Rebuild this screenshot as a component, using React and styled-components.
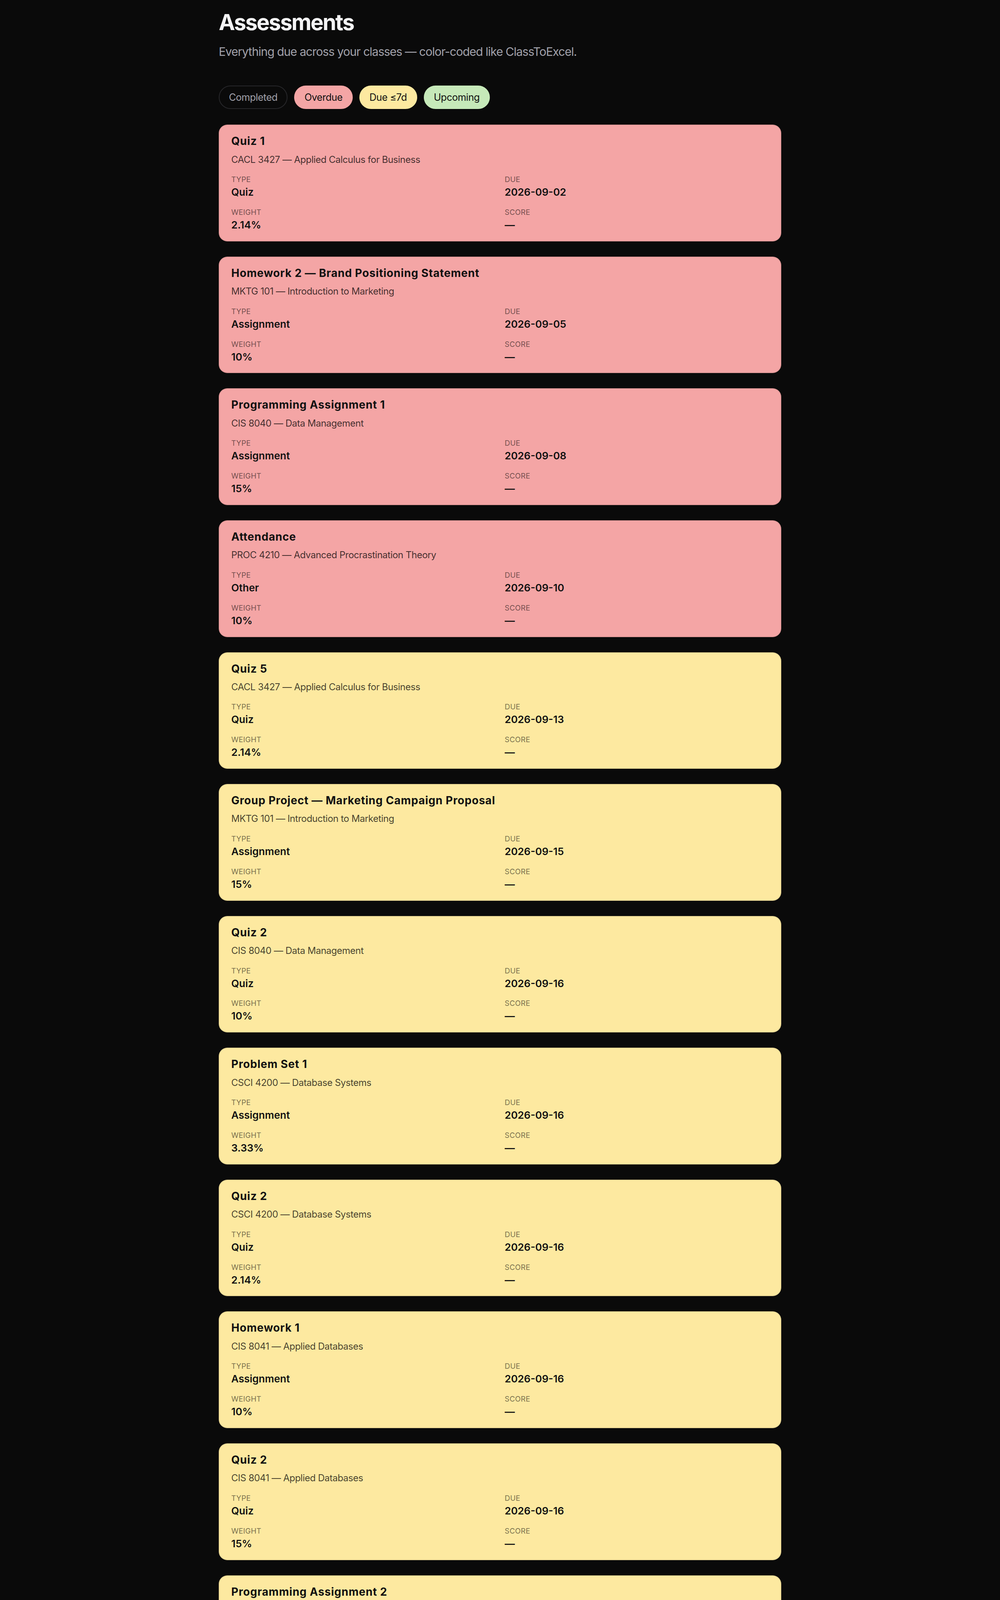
import React from 'react';
import styled, { createGlobalStyle } from 'styled-components';

const GlobalStyle = createGlobalStyle`
  html, body {
    margin: 0;
    padding: 0;
    background: #0a0a0a;
  }
  body {
    font-family: Inter, "Noto Sans", "Liberation Sans", sans-serif;
    -webkit-font-smoothing: antialiased;
  }
  * {
    box-sizing: border-box;
  }
`;

const tones = {
  overdue: { bg: '#f4a5a5', text: '#111111' },
  soon: { bg: '#fde9a0', text: '#111111' },
  upcoming: { bg: '#c6e9b9', text: '#111111' },
  completed: { bg: 'transparent', text: '#a1a1aa', border: '#27272a' },
};

const Page = styled.main`
  max-width: 1440px;
  margin: 0 auto;
  padding: 24px 0 80px;
`;

const Title = styled.h1`
  margin: 0;
  font-size: 56px;
  line-height: 1.2;
  font-weight: 700;
  letter-spacing: -2.3px;
  color: #f4f4f5;
`;

const Subtitle = styled.p`
  margin: 19px 0 0;
  font-size: 30px;
  line-height: 1.5;
  letter-spacing: -1px;
  color: #a1a1aa;
`;

const Legend = styled.div`
  display: flex;
  gap: 17px;
  margin-top: 64px;
`;

const Pill = styled.span`
  display: inline-flex;
  align-items: center;
  padding: 15px 24px;
  border-radius: 999px;
  font-size: 25px;
  line-height: 26px;
  letter-spacing: -0.5px;
  background: ${p => tones[p.$tone].bg};
  color: ${p => tones[p.$tone].text};
  border: 2px solid ${p => tones[p.$tone].border || tones[p.$tone].bg};
`;

const CardList = styled.div`
  display: flex;
  flex-direction: column;
  gap: 39px;
  margin-top: 40px;
`;

const Card = styled.article`
  background: ${p => tones[p.$tone].bg};
  border: 2px solid rgba(0, 0, 0, 0.07);
  border-radius: 22px;
  padding: 22px 30px 23px;
  color: #111111;
`;

const CardTitle = styled.h2`
  margin: 0;
  font-size: 28px;
  line-height: 1.3;
  font-weight: 700;
  letter-spacing: 0.8px;
`;

const Course = styled.div`
  margin-top: 12px;
  font-size: 24px;
  line-height: 1.4;
  letter-spacing: -0.5px;
  color: rgba(0, 0, 0, 0.72);
`;

const Fields = styled.dl`
  display: grid;
  grid-template-columns: 1fr 1fr;
  column-gap: 24px;
  row-gap: 22px;
  margin: 22px 0 0;
`;

const Field = styled.div`
  display: flex;
  flex-direction: column;
  gap: 2px;
`;

const Label = styled.dt`
  font-size: 19px;
  line-height: 26px;
  text-transform: uppercase;
  letter-spacing: 0.2px;
  color: rgba(0, 0, 0, 0.55);
`;

const Value = styled.dd`
  margin: 0;
  font-size: 26px;
  line-height: 1.3;
  font-weight: 600;
  color: #111111;
`;

const assessments = [
  { title: 'Quiz 1', course: 'CACL 3427 — Applied Calculus for Business', type: 'Quiz', due: '2026-09-02', weight: '2.14%', tone: 'overdue' },
  { title: 'Homework 2 — Brand Positioning Statement', course: 'MKTG 101 — Introduction to Marketing', type: 'Assignment', due: '2026-09-05', weight: '10%', tone: 'overdue' },
  { title: 'Programming Assignment 1', course: 'CIS 8040 — Data Management', type: 'Assignment', due: '2026-09-08', weight: '15%', tone: 'overdue' },
  { title: 'Attendance', course: 'PROC 4210 — Advanced Procrastination Theory', type: 'Other', due: '2026-09-10', weight: '10%', tone: 'overdue' },
  { title: 'Quiz 5', course: 'CACL 3427 — Applied Calculus for Business', type: 'Quiz', due: '2026-09-13', weight: '2.14%', tone: 'soon' },
  { title: 'Group Project — Marketing Campaign Proposal', course: 'MKTG 101 — Introduction to Marketing', type: 'Assignment', due: '2026-09-15', weight: '15%', tone: 'soon' },
  { title: 'Quiz 2', course: 'CIS 8040 — Data Management', type: 'Quiz', due: '2026-09-16', weight: '10%', tone: 'soon' },
  { title: 'Problem Set 1', course: 'CSCI 4200 — Database Systems', type: 'Assignment', due: '2026-09-16', weight: '3.33%', tone: 'soon' },
  { title: 'Quiz 2', course: 'CSCI 4200 — Database Systems', type: 'Quiz', due: '2026-09-16', weight: '2.14%', tone: 'soon' },
  { title: 'Homework 1', course: 'CIS 8041 — Applied Databases', type: 'Assignment', due: '2026-09-16', weight: '10%', tone: 'soon' },
  { title: 'Quiz 2', course: 'CIS 8041 — Applied Databases', type: 'Quiz', due: '2026-09-16', weight: '15%', tone: 'soon' },
  { title: 'Programming Assignment 2', course: 'CIS 8040 — Data Management', type: 'Assignment', due: '2026-09-17', weight: '15%', tone: 'soon' },
];

const AssessmentCard = ({ item }) => (
  <Card $tone={item.tone}>
    <CardTitle>{item.title}</CardTitle>
    <Course>{item.course}</Course>
    <Fields>
      <Field>
        <Label>Type</Label>
        <Value>{item.type}</Value>
      </Field>
      <Field>
        <Label>Due</Label>
        <Value>{item.due}</Value>
      </Field>
      <Field>
        <Label>Weight</Label>
        <Value>{item.weight}</Value>
      </Field>
      <Field>
        <Label>Score</Label>
        <Value>{item.score || '—'}</Value>
      </Field>
    </Fields>
  </Card>
);

const App = () => (
  <>
    <GlobalStyle />
    <Page>
      <Title>Assessments</Title>
      <Subtitle>Everything due across your classes — color-coded like ClassToExcel.</Subtitle>
      <Legend>
        <Pill $tone="completed">Completed</Pill>
        <Pill $tone="overdue">Overdue</Pill>
        <Pill $tone="soon">Due ≤7d</Pill>
        <Pill $tone="upcoming">Upcoming</Pill>
      </Legend>
      <CardList>
        {assessments.map((item, i) => (
          <AssessmentCard key={i} item={item} />
        ))}
      </CardList>
    </Page>
  </>
);

export default App;
